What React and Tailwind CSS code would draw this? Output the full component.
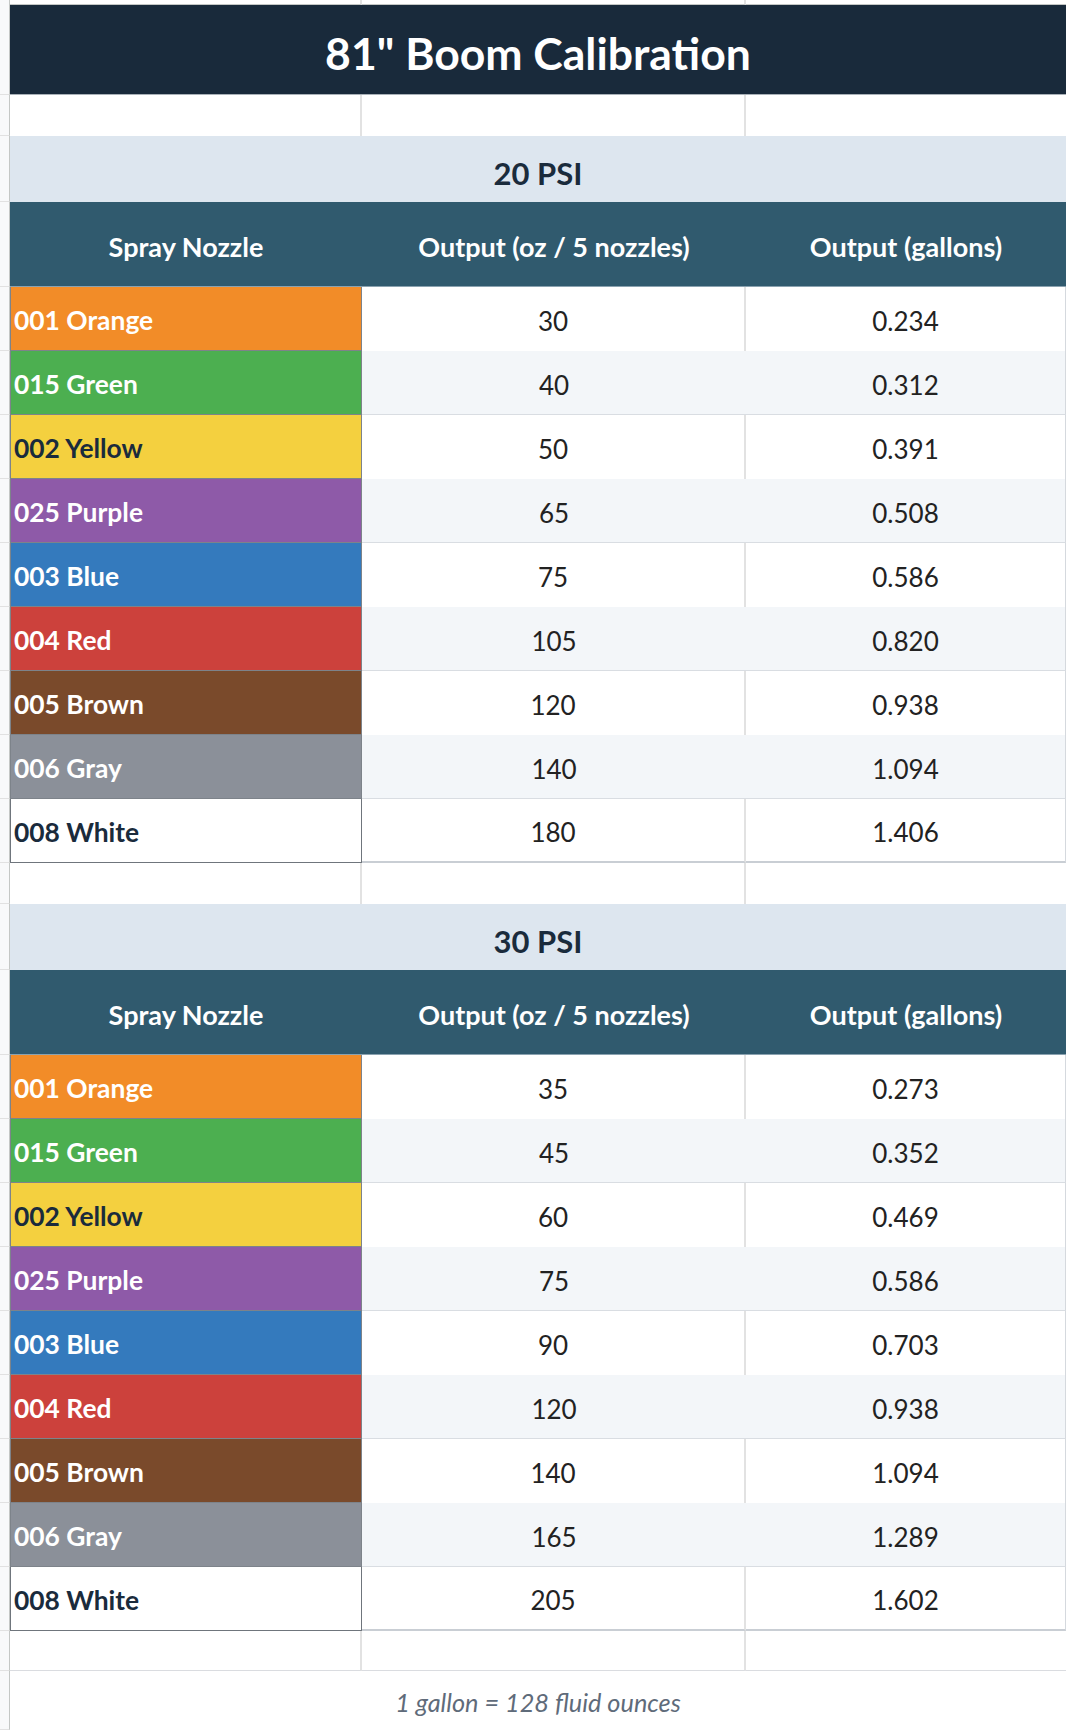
import React from "react";

const nozzleStyles = [
  { bg: "bg-[#f28c28]", text: "text-white" },
  { bg: "bg-[#4caf50]", text: "text-white" },
  { bg: "bg-[#f4d03f]", text: "text-[#1a2b3c]" },
  { bg: "bg-[#8e5aa8]", text: "text-white" },
  { bg: "bg-[#347abd]", text: "text-white" },
  { bg: "bg-[#cc413c]", text: "text-white" },
  { bg: "bg-[#7a4a2b]", text: "text-white" },
  { bg: "bg-[#8b9099]", text: "text-white" },
  { bg: "bg-white", text: "text-[#1a2b3c]" },
];

const names = [
  "001 Orange",
  "015 Green",
  "002 Yellow",
  "025 Purple",
  "003 Blue",
  "004 Red",
  "005 Brown",
  "006 Gray",
  "008 White",
];

const data20 = [
  ["30", "0.234"],
  ["40", "0.312"],
  ["50", "0.391"],
  ["65", "0.508"],
  ["75", "0.586"],
  ["105", "0.820"],
  ["120", "0.938"],
  ["140", "1.094"],
  ["180", "1.406"],
];

const data30 = [
  ["35", "0.273"],
  ["45", "0.352"],
  ["60", "0.469"],
  ["75", "0.586"],
  ["90", "0.703"],
  ["120", "0.938"],
  ["140", "1.094"],
  ["165", "1.289"],
  ["205", "1.602"],
];

const ROW = "grid grid-cols-[10px_352px_384px_320px]";

function Gutter() {
  return <div className="bg-[#f8f9fa] border-r border-r-[#c4c7c5] border-b border-b-[#e1e1e1]" />;
}

function BlankRow({ h, bottom }) {
  return (
    <div className={`${ROW} ${h}`}>
      <Gutter />
      <div className={`border-r-2 border-r-[#e2e2e2] ${bottom ? "border-b border-b-[#dadce0]" : ""}`} />
      <div className={`border-r-2 border-r-[#e2e2e2] ${bottom ? "border-b border-b-[#dadce0]" : ""}`} />
      <div className={`${bottom ? "border-b border-b-[#dadce0]" : ""}`} />
    </div>
  );
}

function PsiBand({ label }) {
  return (
    <div className={`${ROW} h-[66px]`}>
      <Gutter />
      <div className="col-span-3 bg-[#dde6ef] flex items-center justify-center pt-[9px] text-[31px] font-bold text-[#1a2b3c]">
        {label}
      </div>
    </div>
  );
}

function HeaderRow() {
  const cell =
    "bg-[#305a6e] flex items-center justify-center pt-[7px] text-[27px] font-bold text-white border-b border-b-[#8aa2b0]";
  return (
    <div className={`${ROW} h-[85px]`}>
      <Gutter />
      <div className={cell}>Spray Nozzle</div>
      <div className={cell}>Output (oz / 5 nozzles)</div>
      <div className={cell}>Output (gallons)</div>
    </div>
  );
}

function DataRows({ data }) {
  return (
    <>
      {data.map((d, i) => {
        const alt = i % 2 === 1;
        const last = i === data.length - 1;
        const st = nozzleStyles[i];
        const bgBC = alt ? "bg-[#f3f6f9]" : "bg-white";
        const bottomBC = last
          ? "border-b-2 border-b-[#c9ced4]"
          : alt
          ? "border-b border-b-[#d9dde2]"
          : "";
        const borderA = last ? "border-[#6f757c]" : "border-[#7d838a]";
        return (
          <div key={i} className={`${ROW} h-[64px]`}>
            <Gutter />
            <div
              className={`${st.bg} ${st.text} border-l border-r border-b ${borderA} flex items-center pl-[3px] pt-[5px] text-[26.4px] font-bold`}
            >
              {names[i]}
            </div>
            <div
              className={`${bgBC} ${bottomBC} ${alt ? "" : "border-r-2 border-r-[#e2e2e2]"} flex items-center justify-center pt-[5px] text-[26px] text-[#222]`}
            >
              {d[0]}
            </div>
            <div
              className={`${bgBC} ${bottomBC} border-r border-r-[#d5d9de] flex items-center justify-center pt-[5px] text-[26px] text-[#222]`}
            >
              {d[1]}
            </div>
          </div>
        );
      })}
    </>
  );
}

export default function App() {
  return (
    <div className="w-[1066px] h-[1730px] overflow-hidden bg-white [font-family:Lato,'Noto_Sans',sans-serif]">
      {/* top strip */}
      <div className={`${ROW} h-[5px]`}>
        <div className="bg-[#f8f9fa] border-r border-r-[#c4c7c5]" />
        <div className="border-r-2 border-r-[#e2e2e2] border-b border-b-[#c4c7c5]" />
        <div className="border-r-2 border-r-[#e2e2e2] border-b border-b-[#c4c7c5]" />
        <div className="border-b border-b-[#c4c7c5]" />
      </div>

      {/* title */}
      <div className={`${ROW} h-[90px]`}>
        <Gutter />
        <div className="col-span-3 bg-[#192a3b] flex items-center justify-center pt-[8px] text-[44.5px] font-bold text-white border-b border-b-[#a9b1b8]">
          81" Boom Calibration
        </div>
      </div>

      <BlankRow h="h-[41px]" />
      <PsiBand label="20 PSI" />
      <HeaderRow />
      <DataRows data={data20} />

      <BlankRow h="h-[41px]" />
      <PsiBand label="30 PSI" />
      <HeaderRow />
      <DataRows data={data30} />

      <BlankRow h="h-[40px]" bottom />

      {/* footnote */}
      <div className={`${ROW} h-[59px]`}>
        <Gutter />
        <div className="col-span-3 flex items-center justify-center pt-[5px] text-[25.3px] italic text-[#5f6b7a]">
          1 gallon = 128 fluid ounces
        </div>
      </div>
    </div>
  );
}
